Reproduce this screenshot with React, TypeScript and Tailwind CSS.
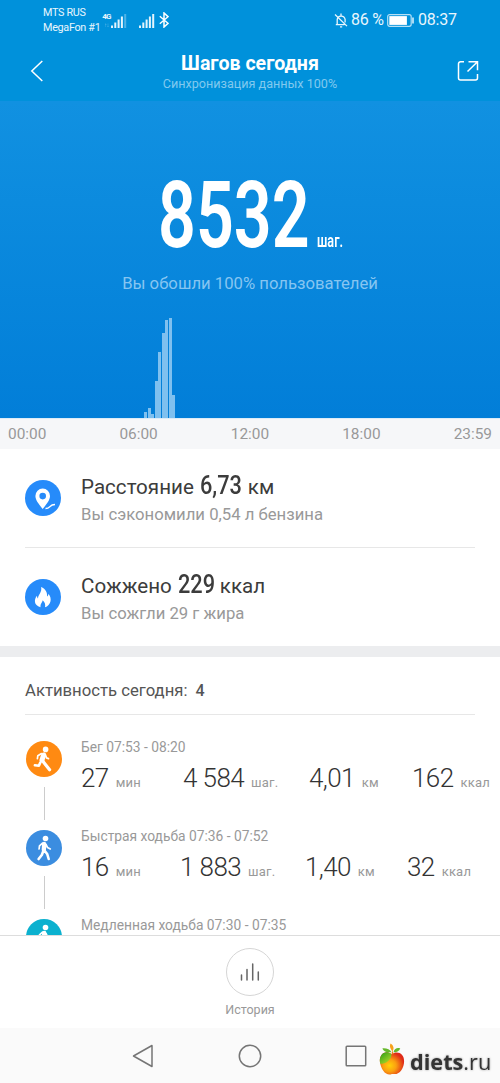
import type { ReactNode } from "react";

const chartBars = [
  { id: 0, height: 6 },
  { id: 1, height: 10 },
  { id: 2, height: 4 },
  { id: 3, height: 37 },
  { id: 4, height: 66 },
  { id: 5, height: 85 },
  { id: 6, height: 98 },
  { id: 7, height: 100 },
  { id: 8, height: 23 },
];

const hours = ["00:00", "06:00", "12:00", "18:00", "23:59"];

const activities = [
  {
    title: "Бег 07:53 - 08:20",
    kind: "run",
    color: "bg-[#ff8a12]",
    stats: [
      { value: "27", unit: "мин", cell: "w-[102px]" },
      { value: "4 584", unit: "шаг.", cell: "w-[126px]" },
      { value: "4,01", unit: "км", cell: "w-[103px]" },
      { value: "162", unit: "ккал", cell: "w-[80px]" },
    ],
  },
  {
    title: "Быстрая ходьба 07:36 - 07:52",
    kind: "walk",
    color: "bg-[#3b8de0]",
    stats: [
      { value: "16", unit: "мин", cell: "w-[99px]" },
      { value: "1 883", unit: "шаг.", cell: "w-[125px]" },
      { value: "1,40", unit: "км", cell: "w-[102px]" },
      { value: "32", unit: "ккал", cell: "w-[80px]" },
    ],
  },
  {
    title: "Медленная ходьба 07:30 - 07:35",
    kind: "walk",
    color: "bg-[#0bb1cf]",
    stats: [],
  },
];

function Signal({ weak }: { weak?: boolean }) {
  return (
    <svg width="16" height="15" viewBox="0 0 16 15" fill="#e4f4fc">
      <rect x="0" y="12.5" width="2" height="2.5" />
      <rect x="3.3" y="9.5" width="2" height="5.5" />
      <rect x="6.6" y="6.5" width="2" height="8.5" />
      <rect x="9.9" y="3.5" width="2" height="11.5" />
      <rect x="13.2" y="1" width="2" height="14" opacity={weak ? 0.35 : 1} />
    </svg>
  );
}

function StatusBar() {
  return (
    <div className="flex h-10 items-center pl-[43px] pr-[42px] text-[#e9f6fd]">
      <div className="w-[59px] whitespace-nowrap text-[10.8px] leading-[15px] tracking-[-0.3px]">
        <p>MTS RUS</p>
        <p>MegaFon #1</p>
      </div>
      <div className="flex w-[9px] flex-col items-center text-[8px] font-bold leading-[9px] tracking-[-0.8px]">
        <span>4G</span>
        <span className="text-[6px] leading-[7px] opacity-40">↑↓</span>
      </div>
      <div className="flex items-center">
        <Signal weak />
        <div className="w-[12px]" />
        <Signal />
        <svg className="ml-[4px]" width="10" height="16" viewBox="0 0 10 16" fill="none" stroke="#fff" strokeWidth="1.5">
          <path d="M0.8 4.3 9 11.3 5 15V1l4 3.7-8.2 7" />
        </svg>
      </div>
      <div className="ml-auto flex items-center text-[16px]">
        <svg className="mr-[3px]" width="14" height="15" viewBox="0 0 14 15" fill="none" stroke="#e9f6fd" strokeWidth="1.3">
          <path d="M3.2 11.5V6.6a4 4 0 0 1 7.9-.2v3.1M1.8 11.7h8.7M7 .5v2M6 13.8h2.2M1 1.5l12 11.6" />
        </svg>
        <span className="w-[36px] whitespace-nowrap tracking-[-0.2px]">86 %</span>
        <svg width="28" height="13" viewBox="0 0 28 13" fill="none">
          <rect x="0.7" y="0.7" width="23.5" height="11.6" rx="2" stroke="#b5e0f6" strokeWidth="1.2" />
          <rect x="2.3" y="2.1" width="17.6" height="8.8" fill="#fff" />
          <path d="M26 3.5v6" stroke="#d6eefa" strokeWidth="1.6" />
        </svg>
        <span className="ml-[3px] w-[40px] whitespace-nowrap tracking-[-0.2px]">08:37</span>
      </div>
    </div>
  );
}

function Header() {
  return (
    <header className="h-[101px] bg-[#0091db] text-white">
      <StatusBar />
      <div className="grid h-[61px] grid-cols-[60px_1fr_60px] items-center">
        <svg width="14" height="22" viewBox="0 0 14 22" fill="none" stroke="#fff" strokeWidth="1.5" className="ml-[30px]">
          <path d="M12.3 1 1.8 11l10.5 10" />
        </svg>
        <div className="pt-[4px] text-center">
          <h1 className="text-[19.6px] font-bold leading-[23px]">Шагов сегодня</h1>
          <p className="text-[12.6px] leading-[18px] text-[#81c9ee]">Синхронизация данных 100%</p>
        </div>
        <svg width="23" height="22" viewBox="0 0 23 22" fill="none" stroke="#fff" strokeWidth="1.5" className="ml-[17px]">
          <path d="M7 1.8H3.5A2 2 0 0 0 1.5 3.8V18a2 2 0 0 0 2 2h15a2 2 0 0 0 2-2v-4M11.5 1.8h9v8.5M20.5 1.8 10.5 11.5" />
        </svg>
      </div>
    </header>
  );
}

function StepsPanel() {
  return (
    <section className="flex h-[317px] flex-col bg-linear-to-b from-[#1191e1] to-[#027ed8]">
      <div className="mt-[68px] flex h-[93px] items-baseline pl-[158px] text-white">
        <span className="block w-[159px] origin-left scale-x-[0.713] whitespace-nowrap text-[93px] font-semibold leading-[93px]">
          8532
        </span>
        <span className="block origin-left scale-x-[0.7] whitespace-nowrap text-[18px] font-semibold">шаг.</span>
      </div>
      <p className="mt-[10px] text-center text-[16.7px] leading-[24px] text-[#86c5f1]">
        Вы обошли 100% пользователей
      </p>
      <div className="mt-auto flex items-end gap-[0.5px] pl-[144px]">
        {chartBars.map((bar) => (
          <div key={bar.id} className="w-[3px] bg-[#7fc0ef]" style={{ height: bar.height }} />
        ))}
      </div>
    </section>
  );
}

function SummaryRow({ icon, children, note }: { icon: ReactNode; children: ReactNode; note: string }) {
  return (
    <div className="flex h-[98px] items-center">
      <div className="mr-[20px] flex h-9 w-9 items-center justify-center rounded-full bg-[#268bfa]">{icon}</div>
      <div className="pt-[3px]">
        <p className="flex items-baseline whitespace-nowrap text-[20.6px] leading-[30px] text-[#3c3c3c]">{children}</p>
        <p className="text-[16.7px] leading-[26px] text-[#999]">{note}</p>
      </div>
    </div>
  );
}

function Figure({ kind }: { kind: string }) {
  if (kind === "run") {
    return (
      <svg width="36" height="36" viewBox="0 0 36 36" fill="none" stroke="#fff" strokeLinecap="round" strokeLinejoin="round">
        <circle cx="19.6" cy="8.4" r="2.8" fill="#fff" stroke="none" />
        <path d="m17.6 14-1.600 5" strokeWidth="5" />
        <path d="m15.500 12.600-3.700 2.200-.4 2.900M19.500 14l1 2.900 2 .7" strokeWidth="1.700" />
        <path d="m16.700 20 3.100 4 3.800 4.700" strokeWidth="3.200" />
        <path d="M14.300 21.500l-1.400 3.200-4-.4" strokeWidth="2.600" />
      </svg>
    );
  }
  return (
    <svg width="36" height="36" viewBox="0 0 36 36" fill="none" stroke="#fff" strokeLinecap="round" strokeLinejoin="round">
      <circle cx="19.5" cy="8.5" r="2.8" fill="#fff" stroke="none" />
      <path d="m18.200 14-.4 6" strokeWidth="4.300" />
      <path d="m16.500 13.200-3 2.600-.4 3.200M20 14.500l1.500 3 2.800 1.400" strokeWidth="1.700" />
      <path d="m18.600 20.700 2.600 3.300 1.500 5M17.300 21l-1.500 4-3.200 4" strokeWidth="2.600" />
    </svg>
  );
}

function DietsLogo() {
  return (
    <div className="absolute bottom-[3px] right-[7px] flex h-[38px] items-center">
      <svg width="29" height="36" viewBox="0 0 30 36" className="mb-[3px] mr-[3px]">
        <defs>
          <radialGradient id="apple" cx="0.4" cy="0.6" r="0.6">
            <stop offset="0" stopColor="#ffd008" />
            <stop offset="0.45" stopColor="#fba010" />
            <stop offset="1" stopColor="#df2b18" />
          </radialGradient>
          <linearGradient id="leaf" x1="0" x2="0.8" y1="0" y2="1">
            <stop offset="0" stopColor="#269c1a" />
            <stop offset="1" stopColor="#b6db26" />
          </linearGradient>
        </defs>
        <path d="M14 12C8 7 1 12 2 20c1 7 5 13 10 13 2 0 2-1 4-.5C22 33.500 27 27 27 19c0-8-7-11-13-7Z" fill="url(#apple)" />
        <path d="M14 12C8 7 1 12 2 20q.1 1 .4 2C8 22 14 18 14 12Z" fill="url(#leaf)" />
        <path d="M14 10C9 10.500 6 9 4.500 6c4-.5 8 1 9.500 4Z" fill="#65b82b" />
        <path d="M15 9c-3-3-3-6-2-8 3 2 4 5 2 8Z" fill="#f6a11b" />
        <path d="M16 10c1-4 4-5 7-4-1 3-4 4-7 4Z" fill="#65b82b" />
        <path d="m14 12 .8-4 1.500 4" fill="#ed7c18" />
      </svg>
      <span className="mt-[2px] w-[83px] whitespace-nowrap font-['Open_Sans','Noto_Sans',sans-serif] text-[21.700px] leading-[28px] text-[#333] drop-shadow-[0_0_1px_#999]">
        <b>diets</b>.ru
      </span>
    </div>
  );
}

export default function App() {
  return (
    <main className="relative flex h-[1083px] w-[500px] flex-col overflow-hidden bg-white font-[Roboto,'Noto_Sans',sans-serif]">
      <Header />
      <StepsPanel />

      <div className="flex h-[31px] items-center justify-between border-t border-[#dcecf8] bg-[#f6f7f9] px-2 pt-[2px] text-[15.4px] text-[#999]">
        {hours.map((hour) => (
          <span key={hour}>{hour}</span>
        ))}
      </div>

      <section className="px-[25px]">
        <SummaryRow
          note="Вы сэкономили 0,54 л бензина"
          icon={
            <svg width="36" height="36" viewBox="0 0 36 36" fill="none">
              <path fillRule="evenodd" fill="#fff" d="M17.700 8.600a7.400 7.400 0 0 0-7.300 7.400c0 4.200 3.500 8 7.300 13 3.800-5 7.300-8.800 7.300-13a7.400 7.400 0 0 0-7.300-7.400Zm0 4.200a3.300 3.300 0 1 1 0 6.600 3.300 3.300 0 0 1 0-6.600Z" />
              <path d="M20.500 28.500c5 .2 3.500-4 9.500-4" stroke="#fff" strokeWidth="1.300" />
            </svg>
          }
        >
          <span>Расстояние</span>
          <span className="ml-[6px] block w-[48px] origin-left scale-x-[0.87] text-[25px] font-medium">6,73</span>
          <span>км</span>
        </SummaryRow>
        <div className="h-px bg-[#e7e7e7]" />
        <SummaryRow
          note="Вы сожгли 29 г жира"
          icon={
            <svg width="36" height="36" viewBox="0 0 36 36" fill="none">
              <path fill="#fff" d="M16 8c5 2 6.500 6 6 9.500 1-.6 1.400-1.600 1.500-2.800 2 2.500 2.500 5 2 7.500-.6 3-2.800 5.200-5.500 6 .8-3-.4-5.300-2.300-7-.3 2.400-2.500 3-2.200 7C8.500 26.500 9 20 12 16.800c0 1.200.3 2 1 2.700C13 15.500 17.500 13 16 8Z" />
            </svg>
          }
        >
          <span>Сожжено</span>
          <span className="ml-[6px] block w-[42px] origin-left scale-x-[0.87] text-[25px] font-medium">229</span>
          <span>ккал</span>
        </SummaryRow>
      </section>

      <div className="h-[11px] shrink-0 bg-[#ecedef]" />

      <section className="h-[278px] overflow-hidden pl-[25px]">
        <h2 className="mr-[25px] flex h-[58px] items-center gap-[8px] border-b border-[#e7e7e7] pt-[10px] text-[16.700px] text-[#555]">
          <span>Активность сегодня:</span>
          <span className="text-[16px] font-medium">4</span>
        </h2>
        <div className="pt-[22px]">
          {activities.map((activity, index) => (
            <article key={activity.title} className="flex h-[89px]">
              <div className="mr-[18px] flex w-[38px] flex-col items-center pt-[4px]">
                <div className={`h-9 w-9 shrink-0 rounded-full ${activity.color}`}>
                  <Figure kind={activity.kind} />
                </div>
                {index < 2 && <div className="mt-[10px] h-[33px] w-px bg-[#ccc]" />}
              </div>
              <div>
                <h3 className="whitespace-nowrap text-[13.8px] leading-[20px] text-[#999]">{activity.title}</h3>
                <div className="mt-[4px] flex">
                  {activity.stats.map((stat) => (
                    <div key={stat.unit} className={`flex shrink-0 items-baseline gap-[7px] whitespace-nowrap ${stat.cell}`}>
                      <span className="text-[26px] font-light leading-[34px] tracking-[-0.6px] text-[#333]">{stat.value}</span>
                      <span className="text-[13px] tracking-[0.2px] text-[#999]">{stat.unit}</span>
                    </div>
                  ))}
                </div>
              </div>
            </article>
          ))}
        </div>
      </section>

      <footer className="flex h-[93px] shrink-0 flex-col items-center border-t border-[#ddd] pt-[12px]">
        <button className="flex h-12 w-12 items-center justify-center rounded-full border border-[#d6d6d6]">
          <svg width="20" height="20" viewBox="0 0 20 20" stroke="#666" strokeWidth="1.500" strokeLinecap="round">
            <path d="M1.500 13v5M7 7.500V18M12.700 2v16M18.300 10v8" />
          </svg>
        </button>
        <span className="mt-[5px] text-[12.500px] leading-[18px] text-[#999]">История</span>
      </footer>

      <nav className="flex h-[55px] shrink-0 items-center justify-between bg-[#fafafa] pl-[132px] pr-[133px]">
        <svg width="22" height="24" viewBox="0 0 22 24" fill="none" stroke="#757575" strokeWidth="1.500" strokeLinejoin="round">
          <path d="M20 1.500v21L1.500 12Z" />
        </svg>
        <svg width="24" height="24" viewBox="0 0 24 24" fill="none" stroke="#757575" strokeWidth="1.500">
          <circle cx="12" cy="12" r="10.700" />
        </svg>
        <svg width="22" height="22" viewBox="0 0 22 22" fill="none" stroke="#757575" strokeWidth="1.500">
          <rect x="1.200" y="1.200" width="19.500" height="19.500" rx="0.800" />
        </svg>
      </nav>
      <DietsLogo />
    </main>
  );
}
